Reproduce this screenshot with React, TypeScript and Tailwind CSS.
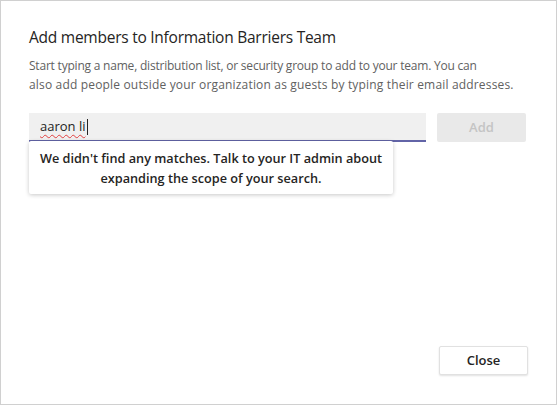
import React from "react";

export default function App() {
  return (
    <div
      className="relative flex h-[405px] w-[557px] flex-col border border-[#d0d0d0] bg-white"
      style={{ fontFamily: '"Open Sans", "Noto Sans", sans-serif' }}
    >
      <div className="flex flex-1 flex-col px-[28px] pt-[24px] pb-[29px]">
        <h1 className="text-[15.5px] leading-[24px] text-[#252423] tracking-[-0.25px]">
          Add members to Information Barriers Team
        </h1>
        <p className="mt-[7px] text-[12px] leading-[19px] text-[#616161]">
          <span className="block whitespace-nowrap tracking-[-0.21px]">
            Start typing a name, distribution list, or security group to add to your team. You can
          </span>
          <span className="block whitespace-nowrap tracking-[0.17px]">
            also add people outside your organization as guests by typing their email addresses.
          </span>
        </p>
        <div className="mt-[19px] flex gap-[11px]">
          <div className="relative h-[29px] w-[397px]">
            <div className="flex h-full items-center border-b-2 border-[#6264a7] bg-[#f0f0f0] pl-[11px] text-[13px] text-[#252423]">
              <span className="underline decoration-wavy decoration-[#e04040] decoration-1 underline-offset-[3px]">
                aaron li
              </span>
              <span className="ml-[1px] h-[16px] w-[1px] bg-[#252423]" />
            </div>
            <div className="absolute left-0 top-[28px] z-10 w-[364px] rounded-[2px] bg-white px-[6px] pt-[7px] pb-[6px] text-center text-[12.7px] font-semibold leading-[20px] text-[#252423] shadow-[0_1px_4px_rgba(0,0,0,0.22)]">
              We didn't find any matches. Talk to your IT admin about expanding the scope of your search.
            </div>
          </div>
          <button className="flex h-[29px] w-[89px] items-center justify-center rounded-[2px] bg-[#e9e9e9] text-[13px] font-semibold text-[#c4c4c4]">
            Add
          </button>
        </div>
        <div className="flex-1" />
        <div className="flex justify-end">
          <button className="flex h-[29px] w-[89px] items-center justify-center rounded-[2px] border border-[#e1e1e1] bg-white text-[13px] font-semibold text-[#252423] shadow-[0_1px_2px_rgba(0,0,0,0.12)]">
            Close
          </button>
        </div>
      </div>
    </div>
  );
}
